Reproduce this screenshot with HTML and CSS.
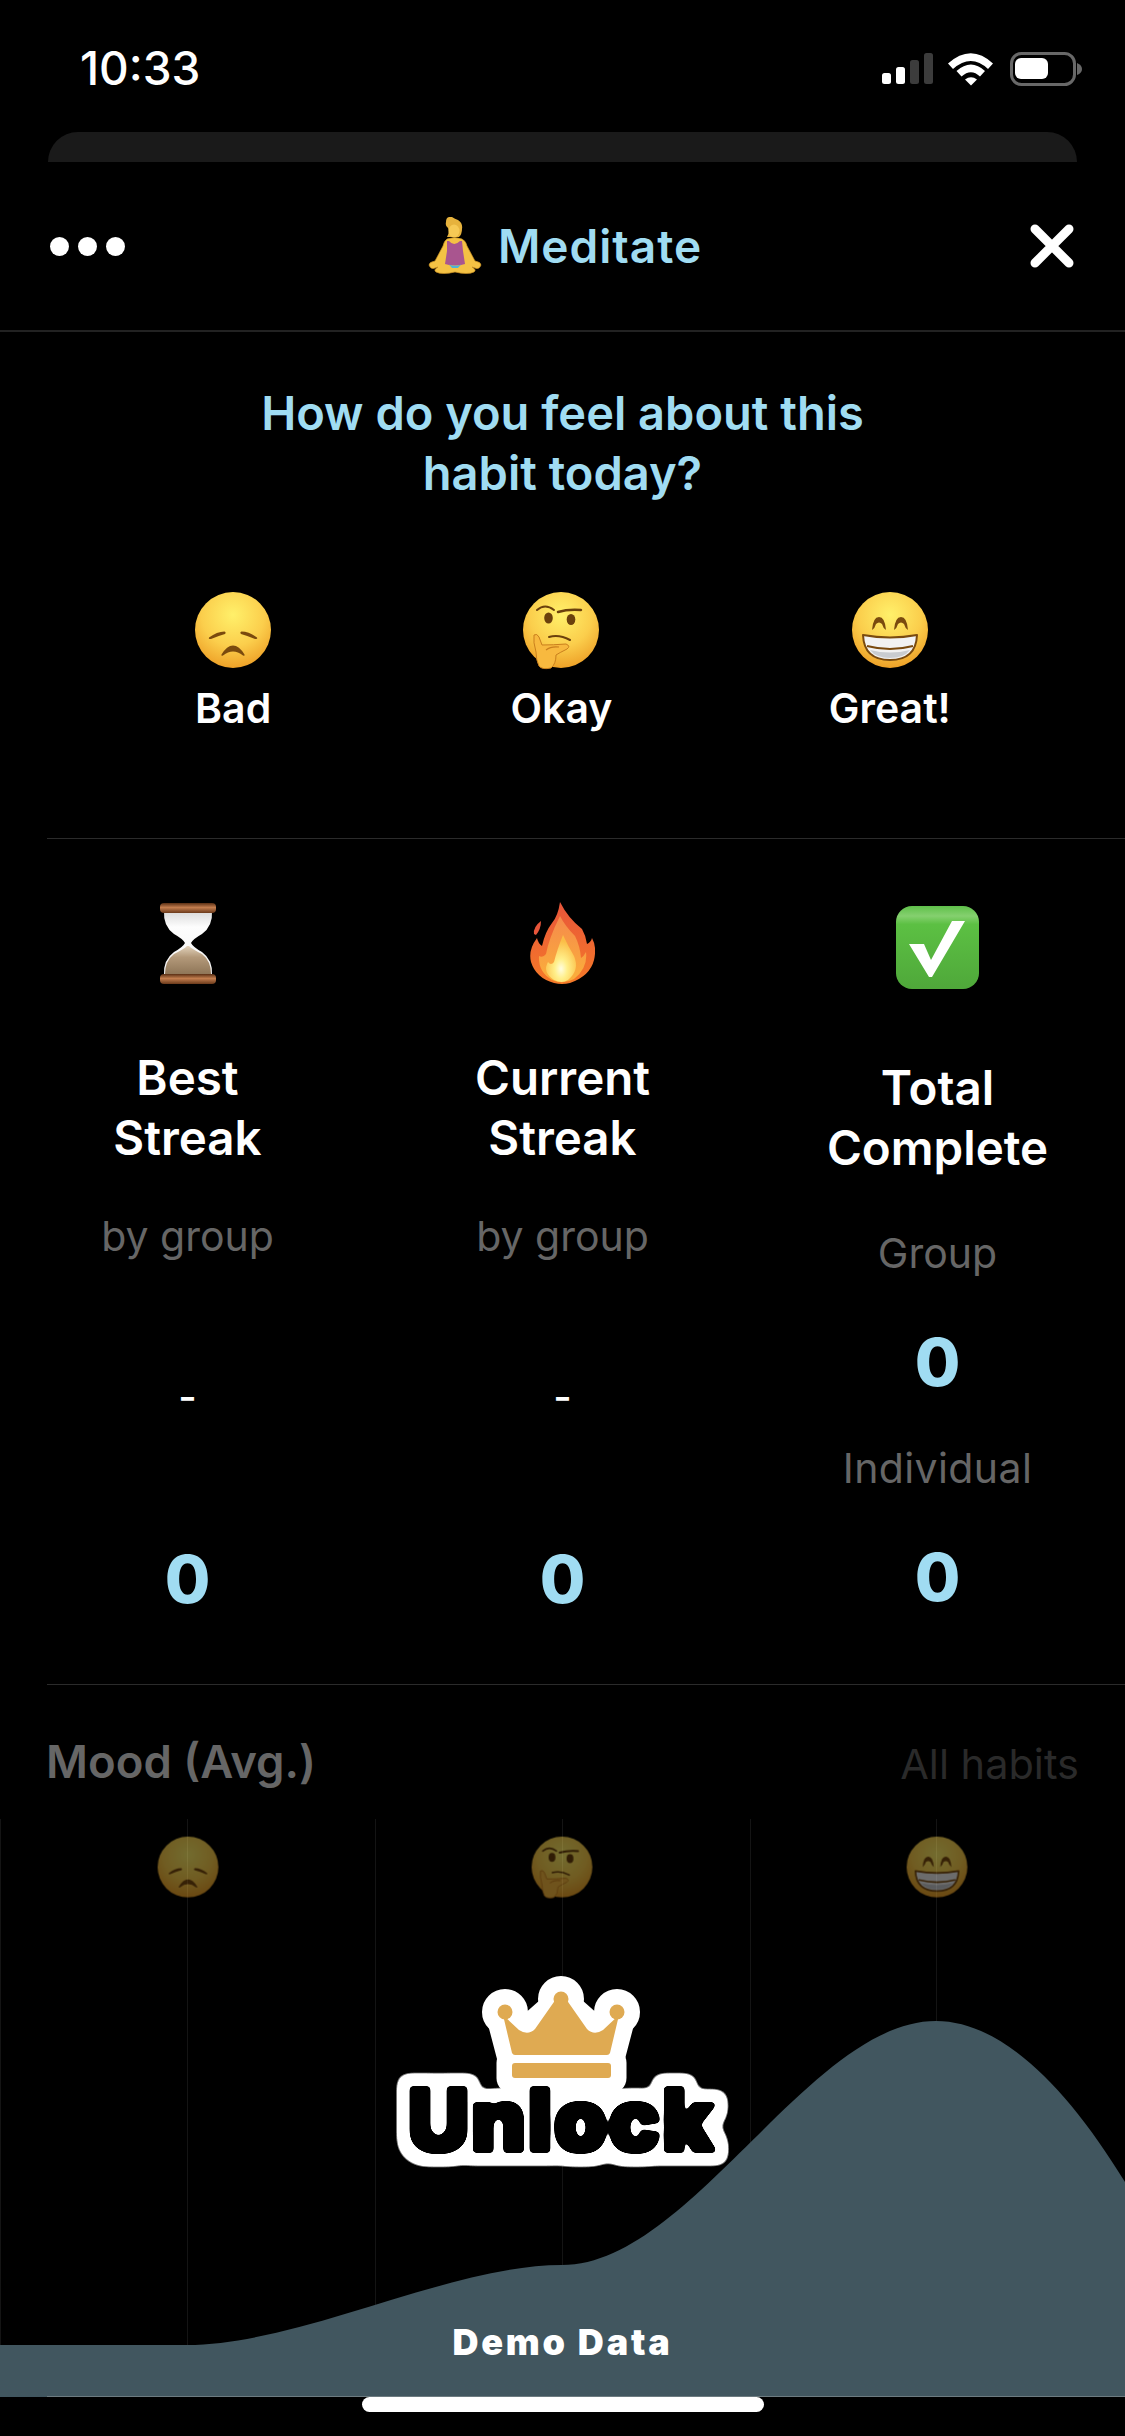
FILE: index.html
```html
<!DOCTYPE html>
<html lang="en">
<head>
<meta charset="utf-8">
<title>Meditate</title>
<link rel="stylesheet" href="styles.css">
</head>
<body>
<svg class="defs" width="0" height="0" aria-hidden="true">
  <defs>
    <radialGradient id="face" cx="50%" cy="30%" r="75%">
      <stop offset="0" stop-color="#fff06a"/>
      <stop offset=".55" stop-color="#fbce4c"/>
      <stop offset="1" stop-color="#ec9a22"/>
    </radialGradient>
    <linearGradient id="brass" x1="0" x2="0" y1="0" y2="1">
      <stop offset="0" stop-color="#5a2f14"/>
      <stop offset=".45" stop-color="#c27d4e"/>
      <stop offset="1" stop-color="#6b3a1b"/>
    </linearGradient>
    <linearGradient id="glass" x1="0" x2="0" y1="0" y2="1">
      <stop offset="0" stop-color="#d9d9d9"/>
      <stop offset=".25" stop-color="#fdfdfd"/>
      <stop offset="1" stop-color="#f4f4f4"/>
    </linearGradient>
    <linearGradient id="sand" x1="0" x2="0" y1="0" y2="1">
      <stop offset="0" stop-color="#e2d3bc"/>
      <stop offset=".4" stop-color="#b3997a"/>
      <stop offset="1" stop-color="#8f7658"/>
    </linearGradient>
    <linearGradient id="box" x1="0" x2="0" y1="0" y2="1">
      <stop offset="0" stop-color="#5fc04a"/>
      <stop offset=".12" stop-color="#85d06f"/>
      <stop offset=".22" stop-color="#5cc043"/>
      <stop offset="1" stop-color="#4fa83a"/>
    </linearGradient>
    <linearGradient id="flameOut" x1="0" x2="0" y1="0" y2="1">
      <stop offset="0" stop-color="#e8553a"/>
      <stop offset="1" stop-color="#f57a28"/>
    </linearGradient>
    <linearGradient id="flameMid" x1="0" x2="0" y1="0" y2="1">
      <stop offset="0" stop-color="#f58a4c"/>
      <stop offset="1" stop-color="#fbb03a"/>
    </linearGradient>
    <radialGradient id="flameCore" cx="50%" cy="72%" r="60%">
      <stop offset="0" stop-color="#fffde0"/>
      <stop offset=".35" stop-color="#ffef8a"/>
      <stop offset="1" stop-color="#fbbd46"/>
    </radialGradient>
    <symbol id="sad" viewBox="0 0 80 80">
      <circle cx="40" cy="40" r="38" fill="url(#face)"/>
      <path d="M16 47.5Q24 41.5 31.5 41.5Q33.5 42.5 32 44Q25 46 18 49Q15 49.5 16 47.5Z" fill="#7a4a0e"/>
      <path d="M64 47.5Q56 41.5 48.500 41.500Q46.500 42.500 48 44Q55 46 62 49Q65 49.500 64 47.500Z" fill="#7a4a0e"/>
      <path d="M28.500 64.500Q34 55.500 40 55.500Q46 55.500 51.500 64.500Q52 66.500 50 65.500Q45 61.500 40 61.500Q35 61.500 30 65.500Q28 66.500 28.500 64.500Z" fill="#7a4a0e"/>
    </symbol>
    <symbol id="think" viewBox="0 0 80 80">
      <circle cx="40" cy="40" r="38" fill="url(#face)"/>
      <path d="M16 20Q24 13 33 20" fill="none" stroke="#6b400c" stroke-width="2" stroke-linecap="round"/>
      <path d="M37 22Q47 19 60 20" fill="none" stroke="#6b400c" stroke-width="2.500" stroke-linecap="round"/>
      <ellipse cx="27.500" cy="28" rx="4.300" ry="5.600" fill="#6b400c"/>
      <ellipse cx="50" cy="29.500" rx="4.300" ry="5.600" fill="#6b400c"/>
      <path d="M28 47Q38 44 49 50" fill="none" stroke="#6b400c" stroke-width="2" stroke-linecap="round"/>
      <path d="M13 45Q16 43 18 47L21 55Q32 55 45 54Q50 56 46 59Q38 63 35 65Q35 74 30 78Q21 80 18 76Q15 70 15 62Q12 52 13 45Z" fill="#f8b93f" stroke="#c97f1d" stroke-width="1"/>
      <path d="M25 60Q30 56 38 57" fill="none" stroke="#c97f1d" stroke-width="1.200"/>
    </symbol>
    <symbol id="grin" viewBox="0 0 80 80">
      <circle cx="40" cy="40" r="38" fill="url(#face)"/>
      <path d="M22 40Q23 27 29 27Q35 27 36 40Q33 38 32 34Q29 31 26 34Q25 38 22 40Z" fill="#7a4a0e"/>
      <path d="M44 40Q45 27 51 27Q57 27 58 40Q55 38 54 34Q51 31 48 34Q47 38 44 40Z" fill="#7a4a0e"/>
      <path d="M13 45Q40 50 67 45Q66 70 40 70Q14 70 13 45Z" fill="#f2f2f2" stroke="#7a4a0e" stroke-width="2" stroke-linejoin="round"/>
      <path d="M17 56Q40 62 63 56" fill="none" stroke="#7a4a0e" stroke-width="2"/>
      <path d="M20 60Q40 65 60 60Q54 68 40 68Q26 68 20 60Z" fill="#c9ccd0"/>
    </symbol>
  </defs>
</svg>

<main class="screen">
  <header class="status">
    <span class="time">10:33</span>
    <svg class="status-icons" viewBox="0 0 200 36" width="200" height="36" aria-hidden="true">
      <rect x="0" y="23" width="9" height="11" rx="2.500" fill="#fff"/>
      <rect x="14" y="17" width="9" height="17" rx="2.500" fill="#fff"/>
      <rect x="28" y="10" width="9" height="24" rx="2.500" fill="#3c3c3c"/>
      <rect x="42" y="3" width="9" height="31" rx="2.500" fill="#3c3c3c"/>
      <path d="M66 12.500Q89 -8 111 12.500L106 18Q89 2 71 18Z" fill="#fff" transform="translate(0 1)"/>
      <path d="M74.500 21Q89 8 103 21L98 26.500Q89 18 79.500 26.500Z" fill="#fff"/>
      <path d="M83 29.500Q89 25 95 29.500L89 35.500Z" fill="#fff"/>
      <rect x="129.500" y="3.500" width="63" height="31" rx="10" fill="none" stroke="#686868" stroke-width="3"/>
      <rect x="133" y="8" width="33" height="21" rx="6" fill="#fff"/>
      <path d="M195 13Q200 15 200 19Q200 23 195 25Z" fill="#686868"/>
    </svg>
  </header>

  <div class="sheet-tab"></div>

  <div class="nav">
    <div class="dots"><i></i><i></i><i></i></div>
    <h1 class="nav-title">
      <svg class="emoji-person" viewBox="0 0 54 57" width="54" height="57" aria-hidden="true">
        <path d="M18 5Q18 -1 24 0Q27 2 30 3Q35 6 34 12Q34 17 31 20L19 20Q22 15 20 11Q17 9 18 5Z" fill="#e6b23d"/>
        <ellipse cx="26" cy="14" rx="5.500" ry="6.500" fill="#f6c955"/>
        <path d="M19 22Q27 19 34 22Q38 24 39 29L47 44Q53 45 53 48Q51 53 47 51L44 50Q49 53 46 55Q40 58 27 55Q14 58 8 55Q5 53 10 50L7 51Q3 53 1 48Q1 45 7 44L15 29Q16 24 19 22Z" fill="#f4c244" stroke="#c98f22" stroke-width=".7"/>
        <path d="M19 24H21Q26 30 32 24H34L35 34L37 47Q27 50 17 47L19 34Z" fill="#a9558f"/>
        <path d="M21 47.500Q27 50 33 47.500L30 51H24Z" fill="#4fb3d9"/>
      </svg>
      <span>Meditate</span>
    </h1>
    <svg class="close" viewBox="0 0 44 44" width="44" height="44" aria-hidden="true">
      <path d="M5 5L39 39M39 5L5 39" stroke="#fff" stroke-width="9" stroke-linecap="round"/>
    </svg>
  </div>

  <h2 class="question">How do you feel about this<br>habit today?</h2>

  <section class="moods">
    <div class="mood"><svg class="face" width="80" height="80" aria-hidden="true"><use href="#sad"/></svg><span>Bad</span></div>
    <div class="mood"><svg class="face" width="80" height="80" aria-hidden="true"><use href="#think"/></svg><span>Okay</span></div>
    <div class="mood"><svg class="face" width="80" height="80" aria-hidden="true"><use href="#grin"/></svg><span>Great!</span></div>
  </section>

  <hr class="rule rule-first">

  <section class="stats">
    <div class="stat">
      <svg class="stat-icon" viewBox="0 0 56 82" width="56" height="82" aria-hidden="true">
        <path d="M4 9H52Q53 24 42 32Q33 37 31 41Q33 45 42 50Q53 58 52 73H4Q3 58 14 50Q23 45 25 41Q23 37 14 32Q3 24 4 9Z" fill="url(#glass)"/>
        <path d="M27 44H29Q32 47 42 52Q51 59 51 72H5Q5 59 14 52Q24 47 27 44Z" fill="url(#sand)"/>
        <rect x="0" y="1" width="56" height="10" rx="4" fill="url(#brass)"/>
        <rect x="0" y="72" width="56" height="10" rx="4" fill="url(#brass)"/>
      </svg>
      <h3 class="stat-title">Best<br>Streak</h3>
      <p class="stat-sub">by group</p>
      <p class="stat-dash">-</p>
      <p class="stat-num stat-num-low">0</p>
    </div>
    <div class="stat">
      <svg class="stat-icon" viewBox="0 0 65 82" width="65" height="82" aria-hidden="true">
        <path d="M30 0Q38 16 52 27Q56 34 57 42Q61 40 62 36Q67 45 64 58Q60 74 40 81Q32 83 24 81Q6 76 1 60Q-2 48 7 36Q8 41 12 44Q15 30 22 21Q28 14 30 0Z" fill="url(#flameOut)"/>
        <path d="M4 32Q3 25 11 19Q11 27 6 33Z" fill="#e8553a"/>
        <path d="M30 14Q35 24 45 34Q50 44 51 56Q54 54 56 50Q58 66 44 77Q33 83 22 78Q8 70 9 54Q13 56 16 52Q19 36 30 14Z" fill="url(#flameMid)"/>
        <path d="M33 33Q38 44 44 54Q50 68 38 78Q32 82 24 78Q12 70 18 60Q21 64 24 60Q27 48 33 33Z" fill="url(#flameCore)"/>
      </svg>
      <h3 class="stat-title">Current<br>Streak</h3>
      <p class="stat-sub">by group</p>
      <p class="stat-dash">-</p>
      <p class="stat-num stat-num-low">0</p>
    </div>
    <div class="stat">
      <svg class="stat-icon stat-icon-check" viewBox="0 0 83 83" width="83" height="83" aria-hidden="true">
        <rect width="83" height="83" rx="16" fill="url(#box)"/>
        <path d="M13 38H28L35 54L56 15H69L36 71H33Z" fill="#fff"/>
      </svg>
      <h3 class="stat-title stat-title-total">Total<br>Complete</h3>
      <p class="stat-sub stat-sub-total">Group</p>
      <p class="stat-num stat-num-group">0</p>
      <p class="stat-sub stat-sub-ind">Individual</p>
      <p class="stat-num stat-num-ind">0</p>
    </div>
  </section>

  <hr class="rule rule-second">

  <div class="mood-head">
    <h2 class="mood-title">Mood (Avg.)</h2>
    <span class="mood-scope">All habits</span>
  </div>

  <section class="chart">
    <svg class="chart-plot" viewBox="0 0 1125 578" width="1125" height="578" aria-hidden="true">
      <g class="grid">
        <path d="M.5 0V526M187.500 0V526M375.500 0V526M562.500 0V526M750.500 0V526M936.500 0V526"/>
      </g>
      <g class="dim-faces">
        <use href="#sad" x="156" y="16" width="64" height="64"/>
        <use href="#think" x="530" y="16" width="64" height="64"/>
        <use href="#grin" x="905" y="16" width="64" height="64"/>
      </g>
      <path class="area" d="M0 526H187C300 526 450 446 562 446C690 446 810 202 936 202C1000 202 1065 265 1125 363V578H0Z"/>
      <path class="area-edge" d="M47 577.500H1125"/>
    </svg>

    <svg class="unlock" viewBox="0 0 345 200" width="345" height="200" role="img" aria-label="Unlock">
      <defs>
        <filter id="sticker" filterUnits="userSpaceOnUse" x="0" y="0" width="345" height="200" color-interpolation-filters="sRGB">
          <feMorphology in="SourceAlpha" operator="dilate" radius="2" result="inkFat"/>
          <feGaussianBlur in="inkFat" stdDeviation="2" result="inkBlur"/>
          <feComponentTransfer in="inkBlur" result="ink"><feFuncA type="linear" slope="10" intercept="-4.500"/></feComponentTransfer>
          <feMorphology in="SourceAlpha" operator="dilate" radius="10" result="fat"/>
          <feGaussianBlur in="fat" stdDeviation="6" result="fatBlur"/>
          <feComponentTransfer in="fatBlur" result="outerA"><feFuncA type="linear" slope="12" intercept="-1.800"/></feComponentTransfer>
          <feFlood flood-color="#fff" result="white"/>
          <feComposite in="white" in2="outerA" operator="in" result="outer"/>
          <feMerge><feMergeNode in="outer"/><feMergeNode in="ink"/></feMerge>
        </filter>
      </defs>
      <g class="crown-halo">
        <circle cx="115" cy="43" r="7.500"/><circle cx="171" cy="30" r="7.500"/><circle cx="227" cy="43" r="7.500"/>
        <path d="M112 48L122 86H220L230 48L206 64L171 33L136 64Z"/>
        <rect x="122" y="94" width="99" height="15"/>
      </g>
      <text class="unlock-text" x="171" y="182" text-anchor="middle" filter="url(#sticker)">Unlock</text>
      <g class="crown">
        <circle cx="115" cy="43" r="7.500"/><circle cx="171" cy="30" r="7.500"/><circle cx="227" cy="43" r="7.500"/>
        <path d="M113 46L122 84Q123 86 125 86H217Q219 86 220 84L229 46L213 61Q204 67 197 60L176 30H166L145 60Q138 67 129 61Z"/>
        <rect x="122" y="94" width="99" height="15" rx="3"/>
      </g>
    </svg>

    <span class="demo">Demo Data</span>
  </section>

  <div class="home-bar"></div>
</main>
</body>
</html>
```
FILE: styles.css
```css
* { box-sizing: border-box; }
html, body { margin: 0; padding: 0; background: #000; }
body { font-family: Inter, "Liberation Sans", sans-serif; color: #fff; }
h1, h2, h3, p { margin: 0; font-weight: inherit; font-size: inherit; }
.defs { position: absolute; }

.screen { position: relative; width: 1125px; height: 2436px; overflow: hidden; background: #000; }

.status { height: 132px; padding: 4px 43px 0 80px; display: flex; align-items: center; justify-content: space-between; }
.time { font-size: 46px; font-weight: 500; line-height: 1; }
.status-icons { display: block; }

.sheet-tab { height: 30px; margin: 0 48px; background: #1a1a1a; border-radius: 30px 30px 0 0; }

.nav { height: 170px; padding: 0 51px 0 50px; border-bottom: 2px solid #222; display: grid; grid-template-columns: 1fr auto 1fr; align-items: center; }
.dots { display: flex; gap: 9px; }
.dots i { width: 19px; height: 19px; border-radius: 50%; background: #fff; }
.nav-title { margin-left: 6px; display: flex; align-items: center; gap: 16px; font-size: 46px; font-weight: 600; letter-spacing: 1px; color: #a0dcf2; line-height: 1; }
.emoji-person { display: block; margin-top: -2px; }
.close { display: block; justify-self: end; }

.question { margin-top: 51px; font-size: 47px; line-height: 60px; font-weight: 600; color: #a0dcf2; text-align: center; }

.moods { margin: 87px 71px 0 69px; display: grid; grid-template-columns: repeat(3, 1fr); }
.mood { display: flex; flex-direction: column; align-items: center; font-size: 41px; font-weight: 600; line-height: 56px; }
.face { display: block; margin-bottom: 10px; }

.rule { height: 1px; margin: 0 0 0 47px; border: 0; background: #2b2b2b; }
.rule-first { margin-top: 102px; }
.rule-second { margin-top: 0; }

.stats { display: grid; grid-template-columns: repeat(3, 1fr); height: 845px; }
.stat { display: flex; flex-direction: column; align-items: center; text-align: center; }
.stat-icon { display: block; margin-top: 63px; }
.stat-icon-check { margin-top: 67px; }
.stat-title { margin-top: 64px; font-size: 47.5px; line-height: 60px; font-weight: 600; }
.stat-title-total { margin-top: 69px; }
.stat-sub { margin-top: 43px; font-size: 41px; line-height: 50px; color: #666; }
.stat-sub-total { margin-top: 50px; }
.stat-sub-ind { margin-top: 43px; letter-spacing: .4px; }
.stat-dash { margin-top: 111px; font-size: 40px; line-height: 50px; font-weight: 500; }
.stat-num { font-size: 66px; line-height: 76px; font-weight: 800; color: #a0dcf2; }
.stat-num-low { margin-top: 119px; }
.stat-num-group { margin-top: 46px; }
.stat-num-ind { margin-top: 46px; }

.mood-head { height: 134px; padding: 29px 46px 0 46px; display: flex; align-items: flex-start; justify-content: space-between; }
.mood-title { font-size: 45.5px; line-height: 96px; height: 96px; font-weight: 600; color: #666; }
.mood-scope { font-size: 41.5px; line-height: 100px; color: #2a2a2a; }

.chart { position: relative; height: 578px; }
.chart-plot { display: block; }
.grid path { stroke: #141414; stroke-width: 1; fill: none; }
.dim-faces { opacity: .45; }
.area { fill: #41565f; }
.area-edge { stroke: #6d7b80; stroke-width: 1; fill: none; }

.unlock { position: absolute; left: 390px; top: 150px; display: block; overflow: visible; }
.crown-halo { fill: #fff; stroke: #fff; stroke-width: 31; stroke-linejoin: round; }
.crown { fill: #dfaa52; }
.unlock-text { font-family: Inter, "Liberation Sans", sans-serif; font-size: 86px; font-weight: 900; letter-spacing: 1px; fill: #000; }

.demo { position: absolute; left: 0; right: 0; top: 501px; text-align: center; font-size: 36px; line-height: 44px; font-weight: 900; letter-spacing: 2.8px; color: #fff; }

.home-bar { position: absolute; left: 362px; top: 2397px; width: 402px; height: 15px; border-radius: 8px; background: #fff; }
```
